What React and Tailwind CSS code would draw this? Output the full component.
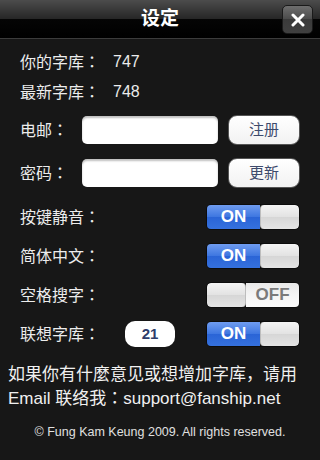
import React from "react";

const font = { fontFamily: '"Liberation Sans", "Noto Sans CJK SC", sans-serif' };

function C() {
  return <span style={{ fontFamily: '"Noto Sans CJK TC", sans-serif' }}>：</span>;
}

function Toggle({ on }) {
  return (
    <div className="flex h-[26px] w-[94px] overflow-hidden rounded-[5px] border border-[#0c0c0c]">
      {on ? (
        <>
          <div className="flex w-[54px] items-center justify-center bg-[linear-gradient(#6f9cf0,#3d76e0_50%,#2a64d6_50%,#3571de)] text-[17px] font-bold text-white">
            ON
          </div>
          <div className="w-[40px] rounded-[4px] border-l border-[#bdbdbd] bg-[linear-gradient(#f4f4f4,#e2e2e2_50%,#d6d6d6_50%,#e4e4e4)]" />
        </>
      ) : (
        <>
          <div className="w-[40px] rounded-[4px] border-r border-[#bdbdbd] bg-[linear-gradient(#f4f4f4,#e2e2e2_50%,#d6d6d6_50%,#e4e4e4)]" />
          <div className="flex w-[54px] items-center justify-center bg-[linear-gradient(#e8e8e8,#f4f4f4_50%,#fbfbfb)] text-[17px] font-bold text-[#7a7a7a]">
            OFF
          </div>
        </>
      )}
    </div>
  );
}

function InfoRow({ label, value }) {
  return (
    <div className="flex h-[30px] items-center text-[16px] text-[#ececec]">
      <span className="w-[93px]">{label}<C /></span>
      <span className="text-[16px]">{value}</span>
    </div>
  );
}

function FieldRow({ label, btn }) {
  return (
    <div className="flex h-[30px] items-center pr-[20px]">
      <span className="w-[62px] text-[16px] text-[#ececec]">{label}<C /></span>
      <div className="h-[28px] w-[136px] rounded-[5px] bg-white shadow-[inset_0_2px_2px_rgba(0,0,0,0.25)]" />
      <div className="ml-auto flex h-[30px] w-[72px] items-center justify-center rounded-[9px] border border-[#555] bg-[linear-gradient(#ffffff,#f2f2f2)] text-[15px] text-[#3d4a6c]">
        {btn}
      </div>
    </div>
  );
}

function ToggleRow({ label, on, badge }) {
  return (
    <div className="flex h-[26px] items-center pr-[20px]">
      <span className="flex-1 text-[16px] text-[#ececec]">{label}<C /></span>
      {badge && (
        <div className="mr-[31px] flex h-[26px] w-[50px] items-center justify-center rounded-[10px] bg-white text-[15px] font-bold text-[#2e3d6b]">
          {badge}
        </div>
      )}
      <Toggle on={on} />
    </div>
  );
}

export default function App() {
  return (
    <div className="h-[460px] w-[320px] overflow-hidden bg-[#171717]" style={font}>
      <div className="relative flex h-[39px] items-center justify-center border-b border-[#3c3c3c] bg-[linear-gradient(#4c4c4c,#262626_50%,#050505_50%,#000)]">
        <span className="text-[19px] font-bold text-white">设定</span>
        <div className="absolute right-[7px] top-[5px] flex h-[29px] w-[31px] items-center justify-center rounded-[5px] border border-[#1a1a1a] bg-[linear-gradient(#6e6e6e,#4a4a4a_50%,#3a3a3a_50%,#404040)]">
          <svg width="14" height="14" viewBox="0 0 14 14">
            <path d="M2 2L12 12M12 2L2 12" stroke="white" strokeWidth="3" strokeLinecap="round" />
          </svg>
        </div>
      </div>
      <div className="pl-[20px] pt-[8px]">
        <InfoRow label="你的字库" value="747" />
        <InfoRow label="最新字库" value="748" />
        <div className="mt-[8px] flex flex-col gap-[13px]">
          <FieldRow label="电邮" btn="注册" />
          <FieldRow label="密码" btn="更新" />
        </div>
        <div className="mt-[16px] flex flex-col gap-[13px]">
          <ToggleRow label="按键静音" on />
          <ToggleRow label="简体中文" on />
          <ToggleRow label="空格搜字" on={false} />
          <ToggleRow label="联想字库" on badge="21" />
        </div>
      </div>
      <div className="mt-[17px] pl-[8px] text-[17px] leading-[22px] text-[#f0f0f0]">
        <div>如果你有什麼意见或想增加字库，请用</div>
        <div>Email 联络我<C />support@fanship.net</div>
      </div>
      <div className="mt-[13px] text-center text-[12.5px] leading-[18px] text-[#e0e0e0]">
        © Fung Kam Keung 2009. All rights reserved.
      </div>
    </div>
  );
}
